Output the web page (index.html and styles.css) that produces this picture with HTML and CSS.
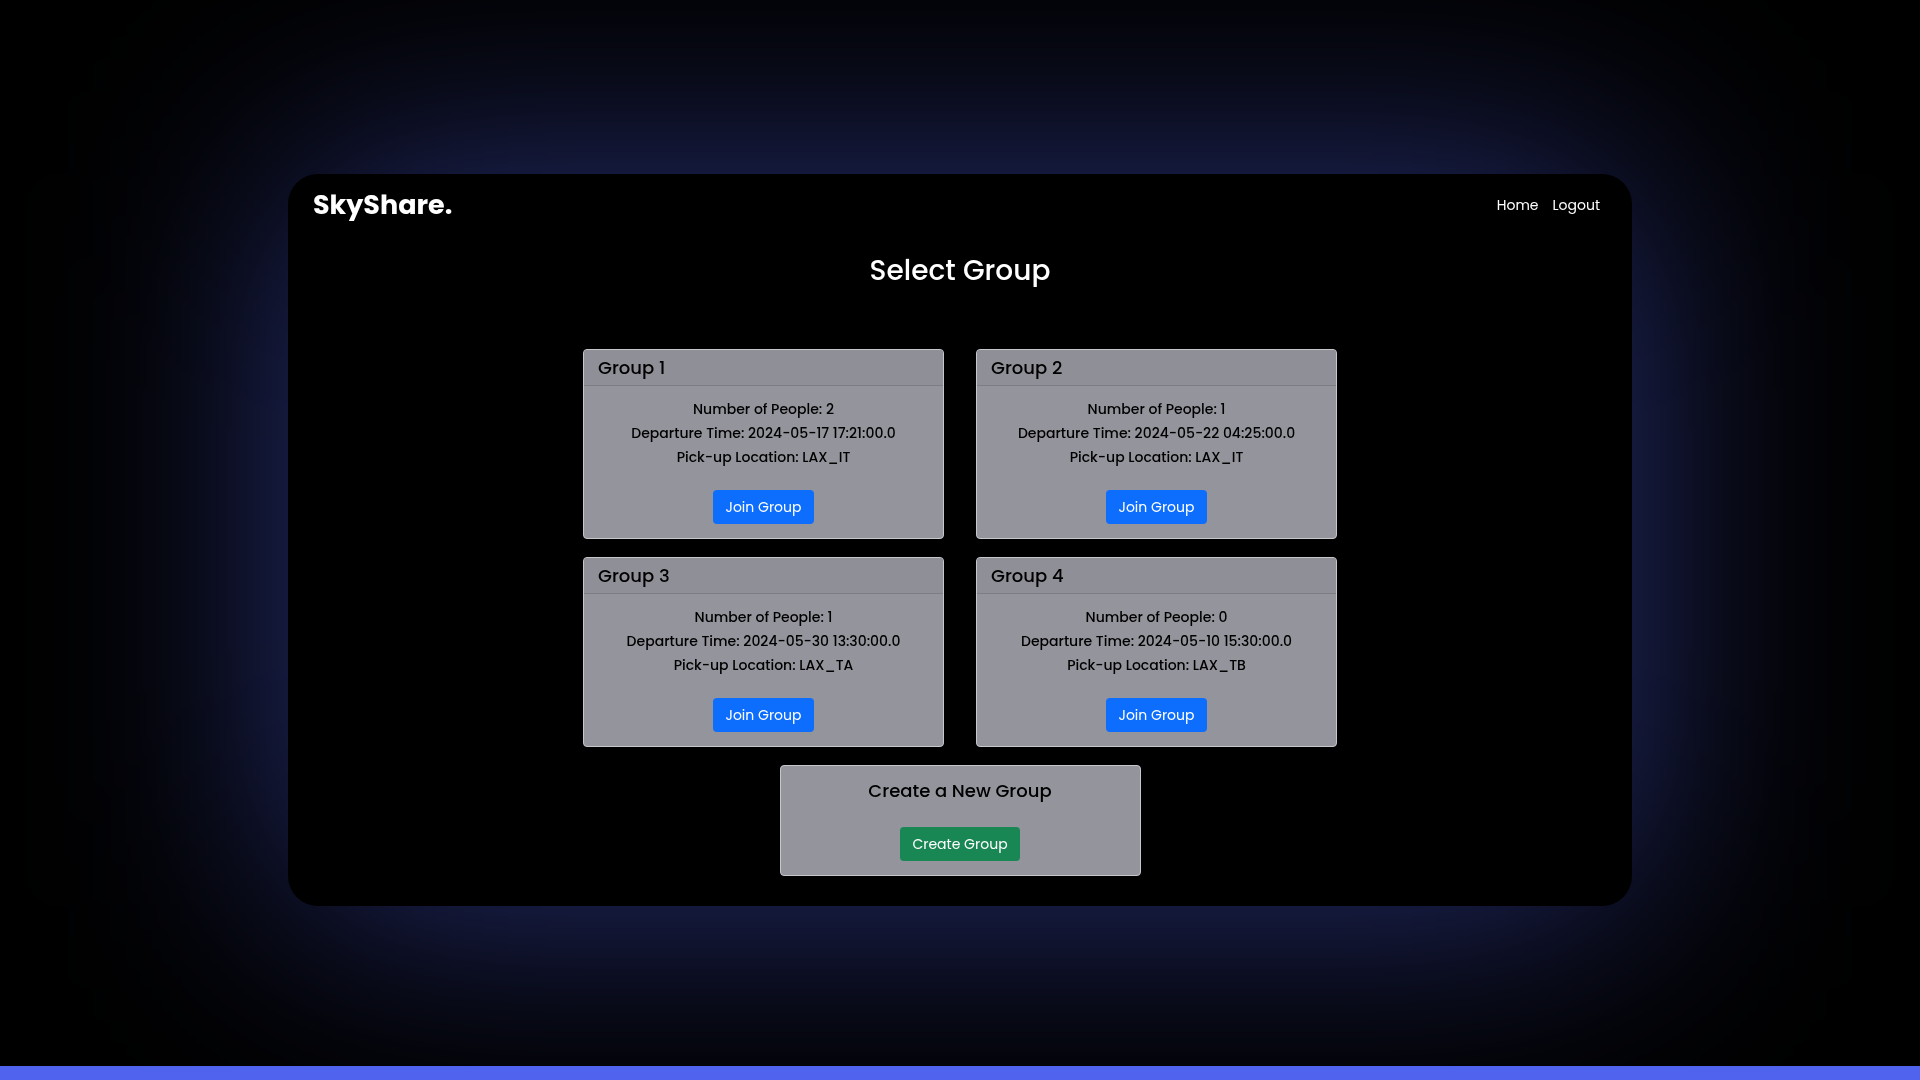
FILE: index.html
```html
<!DOCTYPE html>
<html lang="en">
<head>
  <meta charset="utf-8">
  <meta name="viewport" content="width=device-width, initial-scale=1">
  <title>SkyShare - Select Group</title>
  <link rel="stylesheet" href="styles.css">
</head>
<body>
  <div class="page">
    <div class="panel">
      <header class="topbar">
        <a class="logo" href="#">SkyShare.</a>
        <nav class="nav">
          <a class="nav-link" href="#">Home</a>
          <a class="nav-link" href="#">Logout</a>
        </nav>
      </header>
      <main class="content">
        <h1 class="title">Select Group</h1>
        <div class="groups">
          <section class="card">
            <h2 class="card-header">Group 1</h2>
            <div class="card-body">
              <p class="detail">Number of People: 2</p>
              <p class="detail">Departure Time: 2024-05-17 17:21:00.0</p>
              <p class="detail">Pick-up Location: LAX_IT</p>
              <button class="btn btn-primary" type="button">Join Group</button>
            </div>
          </section>
          <section class="card">
            <h2 class="card-header">Group 2</h2>
            <div class="card-body">
              <p class="detail">Number of People: 1</p>
              <p class="detail">Departure Time: 2024-05-22 04:25:00.0</p>
              <p class="detail">Pick-up Location: LAX_IT</p>
              <button class="btn btn-primary" type="button">Join Group</button>
            </div>
          </section>
          <section class="card">
            <h2 class="card-header">Group 3</h2>
            <div class="card-body">
              <p class="detail">Number of People: 1</p>
              <p class="detail">Departure Time: 2024-05-30 13:30:00.0</p>
              <p class="detail">Pick-up Location: LAX_TA</p>
              <button class="btn btn-primary" type="button">Join Group</button>
            </div>
          </section>
          <section class="card">
            <h2 class="card-header">Group 4</h2>
            <div class="card-body">
              <p class="detail">Number of People: 0</p>
              <p class="detail">Departure Time: 2024-05-10 15:30:00.0</p>
              <p class="detail">Pick-up Location: LAX_TB</p>
              <button class="btn btn-primary" type="button">Join Group</button>
            </div>
          </section>
          <section class="card">
            <div class="card-body card-create">
              <h2 class="create-title">Create a New Group</h2>
              <button class="btn btn-success" type="button">Create Group</button>
            </div>
          </section>
        </div>
      </main>
    </div>
  </div>
  <footer class="strip"></footer>
</body>
</html>
```

FILE: styles.css
```css
* {
  box-sizing: border-box;
}

body {
  margin: 0;
  min-height: 100vh;
  display: flex;
  flex-direction: column;
  background: #000;
  color: #fff;
  font-family: Poppins, Inter, "Liberation Sans", sans-serif;
  font-size: 14px;
  line-height: 24px;
}

h1,
h2,
p {
  margin: 0;
  font-weight: 500;
}

.page {
  flex: 1;
  display: flex;
  align-items: center;
  justify-content: center;
  padding-top: 14px;
  overflow: hidden;
}

.panel {
  position: relative;
  isolation: isolate;
  width: 70%;
  padding-bottom: 30px;
}

/* Blue glow behind the panel */
.panel::before {
  content: "";
  position: absolute;
  inset: 0;
  z-index: -2;
  border-radius: 30px;
  background: rgba(80, 99, 238, 0.5);
  filter: blur(125px);
  will-change: filter;
}

.panel::after {
  content: "";
  position: absolute;
  inset: 0;
  z-index: -1;
  border-radius: 30px;
  background: #000;
}

.topbar {
  display: flex;
  align-items: center;
  justify-content: space-between;
  padding: 13px 32px 11px 25px;
}

.logo {
  color: #fff;
  font-size: 27px;
  font-weight: 700;
  line-height: 36px;
  text-decoration: none;
}

.nav {
  display: flex;
  gap: 14px;
}

.nav-link {
  color: #fff;
  text-decoration: none;
}

.content {
  padding: 19px 24px 0;
}

.title {
  font-size: 28px;
  line-height: 36px;
  text-align: center;
}

.groups {
  display: flex;
  flex-wrap: wrap;
  justify-content: center;
  gap: 18px 32px;
  max-width: 754px;
  margin: 60px auto 0;
}

.card {
  width: calc(50% - 16px);
  border: 1px solid #c6c6cb;
  border-radius: 4px;
  background: #94949c;
  color: #000;
  overflow: hidden;
}

.card-header {
  padding: 5px 14px;
  border-bottom: 1px solid #7d7d84;
  background: #8f8f97;
  font-size: 18px;
  line-height: 25px;
}

.card-body {
  padding: 11px 14px 14px;
  text-align: center;
}

.btn {
  height: 34px;
  margin-top: 21px;
  padding: 0 12px;
  border: 0;
  border-radius: 4px;
  color: #fff;
  font: inherit;
  vertical-align: top;
  cursor: pointer;
}

.btn-primary {
  background: #0d6efd;
}

.btn-success {
  background: #198754;
}

.card-create {
  padding-top: 13px;
}

.create-title {
  margin-bottom: 3px;
  font-size: 18px;
}

.strip {
  height: 14px;
  background: #5063ee;
}
```
